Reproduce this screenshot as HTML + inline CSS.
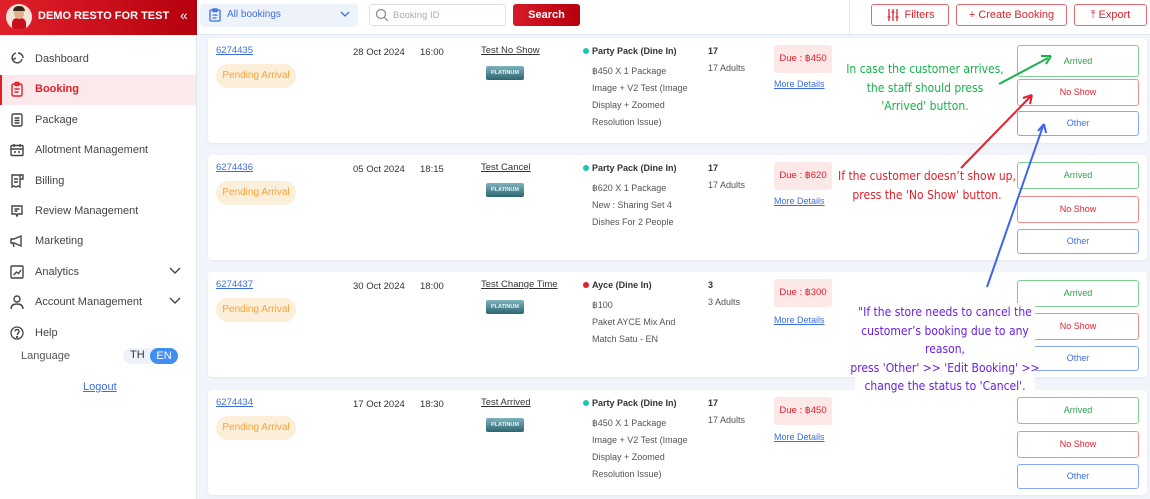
<!DOCTYPE html>
<html><head><meta charset="utf-8"><style>
*{box-sizing:border-box;margin:0;padding:0}
body{width:1150px;height:499px;overflow:hidden;background:#f1f5fb;font-family:"Liberation Sans",sans-serif;position:relative;color:#333}
.a{position:absolute}
.side{left:0;top:0;width:197px;height:499px;background:#fff;border-right:1px solid #e3e8f0}
.brand{left:0;top:0;width:197px;height:35px;background:linear-gradient(90deg,#e0212b,#b5000d)}
.nav{left:0;width:196px;height:30px;font-size:11px;color:#444;display:flex;align-items:center;padding-left:35px}
.nav svg{position:absolute;left:9px;top:7px}
.top{left:197px;top:0;width:953px;height:35px;background:#fff;border-bottom:1px solid #e2e8f2}
.card{left:208px;width:939px;height:105px;background:#fff;border-radius:4px;box-shadow:0 1px 2px rgba(0,0,0,.06)}
.t{position:absolute;font-size:9.5px;white-space:nowrap}
.btn{position:absolute;left:809px;width:122px;border-radius:3px;border:1px solid;font-size:9px;text-align:center;background:#fff}
.tb{position:absolute;top:4px;height:22px;border:1px solid #e06b70;border-radius:3px;color:#d9232d;font-size:11px;display:flex;align-items:center;justify-content:center;gap:5px;background:#fff}
.note{position:absolute;font-family:"DejaVu Sans Condensed","Liberation Sans Narrow",sans-serif;font-size:12px;text-align:center;line-height:18.5px;white-space:nowrap}
</style></head><body>
<div class="a side"></div>
<div class="a brand">
 <div class="a" style="left:6px;top:4px;width:26px;height:26px;border-radius:50%;background:#f4e3d6;overflow:hidden"><div class="a" style="left:6px;top:14px;width:14px;height:12px;background:#c8101c;border-radius:5px 5px 0 0"></div><div class="a" style="left:8px;top:4px;width:10px;height:11px;background:#e0b08c;border-radius:50%"></div><div class="a" style="left:7px;top:2px;width:12px;height:5px;background:#3a2618;border-radius:6px 6px 0 0"></div></div>
 <div class="a" style="left:38px;top:10px;color:#fff;font-weight:bold;font-size:11px">DEMO RESTO FOR TEST</div>
 <div class="a" style="left:180px;top:7px;color:#fff;font-size:14px">«</div>
</div>
<div class="a" style="left:0;top:75px;width:196px;height:30px;background:#fbe9eb;border-left:2px solid #e0212b"></div>
<div class="a nav" style="top:44px"><svg width="16" height="16" viewBox="0 0 16 16" fill="none" stroke="#444" stroke-width="1.4"><path d="M7 2a5 5 0 1 0 6 6"/><path d="M9 2a5 5 0 0 1 5 5"/><path d="M3 9l4-2"/></svg>Dashboard</div>
<div class="a nav" style="top:74px;color:#e0212b;font-weight:bold"><svg width="16" height="16" viewBox="0 0 16 16" fill="none" stroke="#e0212b" stroke-width="1.4"><rect x="3" y="3" width="10" height="12" rx="1.5"/><rect x="6" y="1.5" width="4" height="3" rx="1"/><path d="M5.5 8h5M5.5 11h4"/></svg>Booking</div>
<div class="a nav" style="top:105px"><svg width="16" height="16" viewBox="0 0 16 16" fill="none" stroke="#444" stroke-width="1.4"><rect x="3" y="2" width="10" height="12" rx="1.5"/><path d="M5.5 6h5M5.5 8.5h5M5.5 11h5"/></svg>Package</div>
<div class="a nav" style="top:135px"><svg width="16" height="16" viewBox="0 0 16 16" fill="none" stroke="#444" stroke-width="1.4"><rect x="2" y="3.5" width="12" height="10" rx="1"/><path d="M2 7h12M5 2v3M11 2v3M5 10h2M9 10h2"/></svg>Allotment Management</div>
<div class="a nav" style="top:166px"><svg width="16" height="16" viewBox="0 0 16 16" fill="none" stroke="#444" stroke-width="1.4"><path d="M3 2h8v12l-2-1-2 1-2-1-2 1z"/><path d="M11 2h3v4h-3M5 6h4M5 9h4"/></svg>Billing</div>
<div class="a nav" style="top:196px"><svg width="16" height="16" viewBox="0 0 16 16" fill="none" stroke="#444" stroke-width="1.4"><path d="M3 3h10v8H9l-1 2-1-2H3z"/><path d="M5.5 6h5M5.5 8h3"/></svg>Review Management</div>
<div class="a nav" style="top:226px"><svg width="16" height="16" viewBox="0 0 16 16" fill="none" stroke="#444" stroke-width="1.4"><path d="M2 6h3l7-3v10L5 10H2zM4 10l1 4"/></svg>Marketing</div>
<div class="a nav" style="top:257px"><svg width="16" height="16" viewBox="0 0 16 16" fill="none" stroke="#444" stroke-width="1.4"><rect x="2" y="2" width="12" height="12" rx="1"/><path d="M4.5 11l3-3 2 1.5L12 6"/></svg>Analytics<svg style="left:168px;top:9px" width="14" height="10" viewBox="0 0 14 10" fill="none" stroke="#444" stroke-width="1.4"><path d="M2 2l5 5 5-5"/></svg></div>
<div class="a nav" style="top:287px"><svg width="16" height="16" viewBox="0 0 16 16" fill="none" stroke="#444" stroke-width="1.4"><circle cx="8" cy="5" r="3"/><path d="M2 15c0-4 3-5 6-5s6 1 6 5"/></svg>Account Management<svg style="left:168px;top:9px" width="14" height="10" viewBox="0 0 14 10" fill="none" stroke="#444" stroke-width="1.4"><path d="M2 2l5 5 5-5"/></svg></div>
<div class="a nav" style="top:318px"><svg width="16" height="16" viewBox="0 0 16 16" fill="none" stroke="#444" stroke-width="1.3"><circle cx="8" cy="8" r="6"/><path d="M6 6.5a2 2 0 1 1 2.5 2V10"/><circle cx="8" cy="12" r=".5"/></svg>Help</div>
<div class="a" style="left:21px;top:350px;font-size:11px;color:#555">Language</div>
<div class="a" style="left:123px;top:348px;width:55px;height:16px;border-radius:8px;background:#eef3fb"></div>
<div class="a" style="left:130px;top:349px;font-size:11px;color:#333">TH</div>
<div class="a" style="left:150px;top:348px;width:28px;height:16px;border-radius:8px;background:#3f8ef0;color:#fff;font-size:11px;text-align:center;line-height:16px">EN</div>
<div class="a" style="left:83px;top:381px;font-size:11px;color:#3d6ee0;text-decoration:underline">Logout</div>

<div class="a top">
 <div class="a" style="left:3px;top:4px;width:158px;height:23px;background:#eef3fb;border-radius:4px"></div>
 <svg class="a" style="left:12px;top:8px" width="12" height="14" viewBox="0 0 12 14" fill="none" stroke="#3d6ee0" stroke-width="1.3"><rect x="1" y="2" width="10" height="11" rx="1"/><rect x="4" y="1" width="4" height="2.5"/><path d="M3.5 7h5M3.5 10h4"/></svg>
 <div class="a" style="left:30px;top:9px;font-size:10px;color:#3d6ee0">All bookings</div>
 <svg class="a" style="left:143px;top:11px" width="10" height="7" viewBox="0 0 10 7" fill="none" stroke="#3d6ee0" stroke-width="1.3"><path d="M1 1l4 4 4-4"/></svg>
 <div class="a" style="left:172px;top:4px;width:137px;height:22px;border:1px solid #dce2ea;border-radius:3px;background:#fff"></div>
 <svg class="a" style="left:178px;top:8px" width="14" height="14" viewBox="0 0 14 14" fill="none" stroke="#888" stroke-width="1.2"><circle cx="6" cy="6" r="4.5"/><path d="M9.5 9.5l3.5 3.5"/></svg>
 <div class="a" style="left:196px;top:10px;font-size:9.5px;color:#aaa">Booking ID</div>
 <div class="a" style="left:316px;top:4px;width:67px;height:22px;background:linear-gradient(90deg,#d51b26,#b5000d);border-radius:3px;color:#fff;font-weight:bold;font-size:11px;text-align:center;line-height:22px">Search</div>
 <div class="a" style="left:652px;top:0;width:1px;height:35px;background:#e2e8f2"></div>
 <div class="tb" style="left:674px;width:78px"><svg width="14" height="14" viewBox="0 0 14 14" fill="none" stroke="#d9232d" stroke-width="1.3"><path d="M3 1v12M7 1v12M11 1v12M1.5 9h3M5.5 4h3M9.5 9h3"/></svg>Filters</div>
 <div class="tb" style="left:759px;width:111px">+ Create Booking</div>
 <div class="tb" style="left:877px;width:73px">⤒ Export</div>
</div>

<!-- cards -->
<div class="a card" style="top:38px">
 <div class="t" style="left:8px;top:7px;color:#3d6ee0;text-decoration:underline">6274435</div>
 <div class="a" style="left:8px;top:26px;width:80px;height:24px;border-radius:12px;background:#fcefd9;color:#f6a33a;font-size:10px;text-align:center;line-height:24px">Pending Arrival</div>
 <div class="t" style="left:145px;top:9px">28 Oct 2024</div><div class="t" style="left:212px;top:9px">16:00</div>
 <div class="t" style="left:273px;top:7px;text-decoration:underline">Test No Show</div>
 <div class="a" style="left:278px;top:28px;width:38px;height:14px;border-radius:2px;background:linear-gradient(#7fb3bd,#2b6670);color:#e7f2f4;font-size:5.5px;font-weight:bold;text-align:center;line-height:14px">PLATINUM</div>
 <div class="a" style="left:375px;top:10px;width:6px;height:6px;border-radius:50%;background:#19c6b5"></div>
 <div class="t" style="left:384px;top:8px;font-weight:bold;font-size:9px">Party Pack (Dine In)</div>
 <div class="t" style="left:384px;top:25px;line-height:17px;color:#555;font-size:9px">฿450 X 1 Package<br>Image + V2 Test (Image<br>Display + Zoomed<br>Resolution Issue)</div>
 <div class="t" style="left:500px;top:8px;font-weight:bold;font-size:9px">17</div><div class="t" style="left:500px;top:25px;color:#555;font-size:9px">17 Adults</div>
 <div class="a" style="left:566px;top:7px;width:58px;height:28px;background:#fde8e8;border-radius:3px;color:#e0212b;font-size:9.5px;text-align:center;line-height:28px">Due : ฿450</div>
 <div class="t" style="left:566px;top:41px;color:#3d6ee0;text-decoration:underline;font-size:9px">More Details</div>
 <div class="btn" style="top:7px;height:32px;line-height:30px;border-color:#7ccf8e;color:#2f9e4a">Arrived</div>
 <div class="btn" style="top:41px;height:27px;line-height:25px;border-color:#f38e8e;color:#e0212b">No Show</div>
 <div class="btn" style="top:73px;height:25px;line-height:23px;border-color:#86a9f2;color:#3d6ee0">Other</div>
</div>

<div class="a card" style="top:155px">
 <div class="t" style="left:8px;top:7px;color:#3d6ee0;text-decoration:underline">6274436</div>
 <div class="a" style="left:8px;top:26px;width:80px;height:24px;border-radius:12px;background:#fcefd9;color:#f6a33a;font-size:10px;text-align:center;line-height:24px">Pending Arrival</div>
 <div class="t" style="left:145px;top:9px">05 Oct 2024</div><div class="t" style="left:212px;top:9px">18:15</div>
 <div class="t" style="left:273px;top:7px;text-decoration:underline">Test Cancel</div>
 <div class="a" style="left:278px;top:28px;width:38px;height:14px;border-radius:2px;background:linear-gradient(#7fb3bd,#2b6670);color:#e7f2f4;font-size:5.5px;font-weight:bold;text-align:center;line-height:14px">PLATINUM</div>
 <div class="a" style="left:375px;top:10px;width:6px;height:6px;border-radius:50%;background:#19c6b5"></div>
 <div class="t" style="left:384px;top:8px;font-weight:bold;font-size:9px">Party Pack (Dine In)</div>
 <div class="t" style="left:384px;top:25px;line-height:17px;color:#555;font-size:9px">฿620 X 1 Package<br>New : Sharing Set 4<br>Dishes For 2 People</div>
 <div class="t" style="left:500px;top:8px;font-weight:bold;font-size:9px">17</div><div class="t" style="left:500px;top:25px;color:#555;font-size:9px">17 Adults</div>
 <div class="a" style="left:566px;top:7px;width:58px;height:28px;background:#fde8e8;border-radius:3px;color:#e0212b;font-size:9.5px;text-align:center;line-height:28px">Due : ฿620</div>
 <div class="t" style="left:566px;top:41px;color:#3d6ee0;text-decoration:underline;font-size:9px">More Details</div>
 <div class="btn" style="top:7px;height:27px;line-height:25px;border-color:#7ccf8e;color:#2f9e4a">Arrived</div>
 <div class="btn" style="top:41px;height:27px;line-height:25px;border-color:#f38e8e;color:#e0212b">No Show</div>
 <div class="btn" style="top:74px;height:25px;line-height:23px;border-color:#86a9f2;color:#3d6ee0">Other</div>
</div>

<div class="a card" style="top:272px">
 <div class="t" style="left:8px;top:7px;color:#3d6ee0;text-decoration:underline">6274437</div>
 <div class="a" style="left:8px;top:26px;width:80px;height:24px;border-radius:12px;background:#fcefd9;color:#f6a33a;font-size:10px;text-align:center;line-height:24px">Pending Arrival</div>
 <div class="t" style="left:145px;top:9px">30 Oct 2024</div><div class="t" style="left:212px;top:9px">18:00</div>
 <div class="t" style="left:273px;top:7px;text-decoration:underline">Test Change Time</div>
 <div class="a" style="left:278px;top:28px;width:38px;height:14px;border-radius:2px;background:linear-gradient(#7fb3bd,#2b6670);color:#e7f2f4;font-size:5.5px;font-weight:bold;text-align:center;line-height:14px">PLATINUM</div>
 <div class="a" style="left:375px;top:10px;width:6px;height:6px;border-radius:50%;background:#e0212b"></div>
 <div class="t" style="left:384px;top:8px;font-weight:bold;font-size:9px">Ayce (Dine In)</div>
 <div class="t" style="left:384px;top:25px;line-height:17px;color:#555;font-size:9px">฿100<br>Paket AYCE Mix And<br>Match Satu - EN</div>
 <div class="t" style="left:500px;top:8px;font-weight:bold;font-size:9px">3</div><div class="t" style="left:500px;top:25px;color:#555;font-size:9px">3 Adults</div>
 <div class="a" style="left:566px;top:7px;width:58px;height:28px;background:#fde8e8;border-radius:3px;color:#e0212b;font-size:9.5px;text-align:center;line-height:28px">Due : ฿300</div>
 <div class="t" style="left:566px;top:43px;color:#3d6ee0;text-decoration:underline;font-size:9px">More Details</div>
 <div class="btn" style="top:8px;height:27px;line-height:25px;border-color:#7ccf8e;color:#2f9e4a">Arrived</div>
 <div class="btn" style="top:41px;height:27px;line-height:25px;border-color:#f38e8e;color:#e0212b">No Show</div>
 <div class="btn" style="top:74px;height:25px;line-height:23px;border-color:#86a9f2;color:#3d6ee0">Other</div>
</div>

<div class="a card" style="top:390px">
 <div class="t" style="left:8px;top:7px;color:#3d6ee0;text-decoration:underline">6274434</div>
 <div class="a" style="left:8px;top:26px;width:80px;height:24px;border-radius:12px;background:#fcefd9;color:#f6a33a;font-size:10px;text-align:center;line-height:24px">Pending Arrival</div>
 <div class="t" style="left:145px;top:9px">17 Oct 2024</div><div class="t" style="left:212px;top:9px">18:30</div>
 <div class="t" style="left:273px;top:7px;text-decoration:underline">Test Arrived</div>
 <div class="a" style="left:278px;top:28px;width:38px;height:14px;border-radius:2px;background:linear-gradient(#7fb3bd,#2b6670);color:#e7f2f4;font-size:5.5px;font-weight:bold;text-align:center;line-height:14px">PLATINUM</div>
 <div class="a" style="left:375px;top:10px;width:6px;height:6px;border-radius:50%;background:#19c6b5"></div>
 <div class="t" style="left:384px;top:8px;font-weight:bold;font-size:9px">Party Pack (Dine In)</div>
 <div class="t" style="left:384px;top:25px;line-height:17px;color:#555;font-size:9px">฿450 X 1 Package<br>Image + V2 Test (Image<br>Display + Zoomed<br>Resolution Issue)</div>
 <div class="t" style="left:500px;top:8px;font-weight:bold;font-size:9px">17</div><div class="t" style="left:500px;top:25px;color:#555;font-size:9px">17 Adults</div>
 <div class="a" style="left:566px;top:7px;width:58px;height:28px;background:#fde8e8;border-radius:3px;color:#e0212b;font-size:9.5px;text-align:center;line-height:28px">Due : ฿450</div>
 <div class="t" style="left:566px;top:42px;color:#3d6ee0;text-decoration:underline;font-size:9px">More Details</div>
 <div class="btn" style="top:7px;height:27px;line-height:25px;border-color:#7ccf8e;color:#2f9e4a">Arrived</div>
 <div class="btn" style="top:41px;height:27px;line-height:25px;border-color:#f38e8e;color:#e0212b">No Show</div>
 <div class="btn" style="top:74px;height:25px;line-height:23px;border-color:#86a9f2;color:#3d6ee0">Other</div>
</div>

<!-- annotations -->
<div class="note" style="left:835px;top:60px;width:180px;color:#16b24b">In case the customer arrives,<br>the staff should press<br>'Arrived' button.</div>
<div class="note" style="left:832px;top:167px;width:190px;color:#e0212b">If the customer doesn’t show up,<br>press the 'No Show' button.</div>
<div class="a" style="left:855px;top:303px;width:180px;height:92px;background:#fff"></div>
<div class="note" style="left:845px;top:303px;width:200px;color:#6a1fe0">"If the store needs to cancel the<br>customer’s booking due to any<br>reason,<br>press 'Other' &gt;&gt; 'Edit Booking' &gt;&gt;<br>change the status to 'Cancel'.</div>
<svg class="a" style="left:0;top:0" width="1150" height="499">
 <g stroke-width="2" fill="none">
  <path d="M999 84L1048 58" stroke="#16b24b"/><path d="M1051 56l-10 0M1051 56l-5 8" stroke="#16b24b"/>
  <path d="M961 168L1031 96" stroke="#e0212b"/><path d="M1032 95l-9 3M1032 95l-2 9" stroke="#e0212b"/>
  <path d="M987 287L1043 126" stroke="#3d63f0"/><path d="M1044 124l-6 7M1044 124l2 9" stroke="#3d63f0"/>
 </g>
</svg>
</body></html>
